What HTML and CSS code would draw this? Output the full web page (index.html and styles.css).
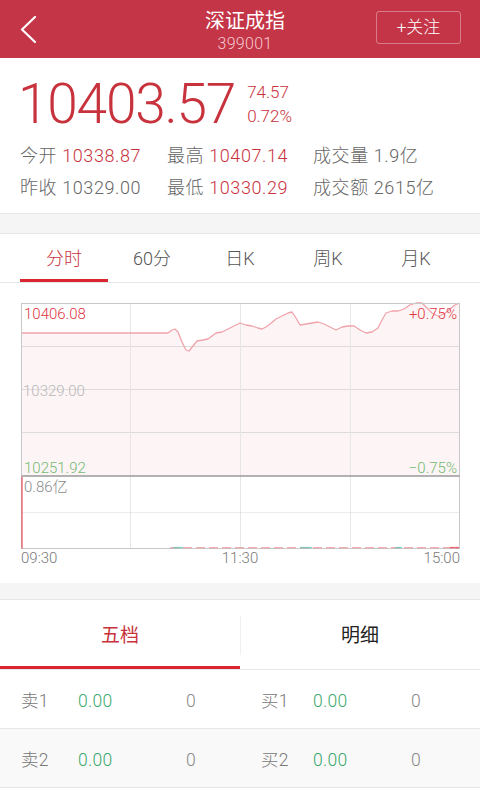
FILE: index.html
```html
<!DOCTYPE html>
<html lang="zh-CN">
<head>
<meta charset="utf-8">
<title>深证成指</title>
<link rel="stylesheet" href="styles.css">
</head>
<body>
<div class="app">
  <header class="topbar">
    <div class="back">
      <svg width="20" height="30" viewBox="0 0 20 30"><polyline points="15,2 2,14.5 15,27" fill="none" stroke="#fff" stroke-width="2.2" stroke-linecap="round" stroke-linejoin="round"/></svg>
    </div>
    <div class="title">
      <div class="name">深证成指</div>
      <div class="code">399001</div>
    </div>
    <div class="follow">+关注</div>
  </header>

  <section class="quote">
    <div class="price">10403.57</div>
    <div class="change">
      <div>74.57</div>
      <div>0.72%</div>
    </div>
  </section>

  <section class="stats">
    <div class="stat">今开 <span class="up">10338.87</span></div>
    <div class="stat">最高 <span class="up">10407.14</span></div>
    <div class="stat">成交量 1.9亿</div>
    <div class="stat">昨收 10329.00</div>
    <div class="stat">最低 <span class="up">10330.29</span></div>
    <div class="stat">成交额 2615亿</div>
  </section>

  <div class="band band-1"></div>

  <nav class="tabs">
    <div class="tab active">分时</div>
    <div class="tab">60分</div>
    <div class="tab">日K</div>
    <div class="tab">周K</div>
    <div class="tab">月K</div>
  </nav>

  <section class="chart">
    <svg width="480" height="300" viewBox="0 283 480 300">
      <polygon class="area" points="21.5,333 168,333 172,330 175,329 178,332 182,342 186,350 189,351 193,346 197,341 203,340 208,339 212,336 216,333 222,332 228,329 234,326 240,323 246,325 252,326 258,328 262,329 266,327 270,324 276,319 282,316 288,313 292,312 296,318 300,325 306,324 312,323 318,322 324,324 330,327 336,330 342,327 348,326 354,326 360,330 366,333 372,332 378,328 382,320 386,313 392,311 398,311 404,309 410,305 416,303 422,303 426,307 432,313 438,316 444,314 450,309 455,305 459.5,303 459.5,476 21.5,476"/>
      <line class="hgrid" x1="21.5" y1="346.5" x2="459.5" y2="346.5"/>
      <line class="hgrid" x1="21.5" y1="389.5" x2="459.5" y2="389.5"/>
      <line class="hgrid" x1="21.5" y1="432.5" x2="459.5" y2="432.5"/>
      <line class="vgrid" x1="130.5" y1="303" x2="130.5" y2="549"/>
      <line class="vgrid" x1="240.5" y1="303" x2="240.5" y2="549"/>
      <line class="vgrid" x1="350.5" y1="303" x2="350.5" y2="549"/>
      <line class="dotted" x1="21.5" y1="512.5" x2="459.5" y2="512.5"/>
      <polyline class="pline" points="21.5,333 168,333 172,330 175,329 178,332 182,342 186,350 189,351 193,346 197,341 203,340 208,339 212,336 216,333 222,332 228,329 234,326 240,323 246,325 252,326 258,328 262,329 266,327 270,324 276,319 282,316 288,313 292,312 296,318 300,325 306,324 312,323 318,322 324,324 330,327 336,330 342,327 348,326 354,326 360,330 366,333 372,332 378,328 382,320 386,313 392,311 398,311 404,309 410,305 416,303 422,303 426,307 432,313 438,316 444,314 450,309 455,305 459.5,303"/>
      <rect class="frame" x="21.5" y="303.5" width="438" height="245"/>
      <line class="divider" x1="21.5" y1="476" x2="459.5" y2="476"/>
      <line class="vol-up" x1="22" y1="477" x2="22" y2="548.5"/>
      <line class="vol-up dash" x1="170" y1="547.6" x2="458" y2="547.6"/>
      <line class="vol-down" x1="173" y1="547.6" x2="183" y2="547.6"/>
      <line class="vol-down" x1="300" y1="547.6" x2="312" y2="547.6"/>
      <line class="vol-down" x1="395" y1="547.6" x2="402" y2="547.6"/>
      <line class="vol-up" x1="450" y1="547.6" x2="459" y2="547.6"/>
      <text class="lbl red" x="24" y="319">10406.08</text>
      <text class="lbl red" x="457" y="319" text-anchor="end">+0.75%</text>
      <text class="lbl mid" x="23" y="396">10329.00</text>
      <text class="lbl green" x="24" y="473">10251.92</text>
      <text class="lbl green" x="457" y="473" text-anchor="end">−0.75%</text>
      <text class="lbl gray" x="24" y="492">0.86亿</text>
      <text class="lbl time" x="21" y="563">09:30</text>
      <text class="lbl time" x="240" y="563" text-anchor="middle">11:30</text>
      <text class="lbl time" x="460" y="563" text-anchor="end">15:00</text>
    </svg>
  </section>

  <div class="band band-2"></div>

  <nav class="subtabs">
    <div class="subtab active">五档</div>
    <div class="subtab">明细</div>
  </nav>

  <section class="book">
    <div class="row">
      <div class="half sell"><span class="lab">卖1</span><span class="pr">0.00</span><span class="qty">0</span></div>
      <div class="half buy"><span class="lab">买1</span><span class="pr">0.00</span><span class="qty">0</span></div>
    </div>
    <div class="row alt">
      <div class="half sell"><span class="lab">卖2</span><span class="pr">0.00</span><span class="qty">0</span></div>
      <div class="half buy"><span class="lab">买2</span><span class="pr">0.00</span><span class="qty">0</span></div>
    </div>
  </section>
</div>
</body>
</html>
```

FILE: styles.css
```css
* { box-sizing: border-box; }
html, body { margin: 0; padding: 0; background: #fff; }
body {
  font-family: Roboto, "Noto Sans CJK SC", sans-serif;
  font-weight: 300;
  color: #333;
  width: 480px;
  height: 800px;
  overflow: hidden;
}

.topbar {
  height: 58px;
  background: #c43547;
  display: flex;
  align-items: center;
  padding: 0 20px;
  color: #fff;
}
.back { width: 60px; height: 30px; display: flex; align-items: center; padding-top: 2px; }
.title { flex: 1; text-align: center; padding-left: 34px; padding-top: 4px; }
.title .name { font-size: 20px; line-height: 24px; font-weight: 400; }
.title .code { font-size: 16px; line-height: 20px; margin-top: 1px; color: #f4c9ce; letter-spacing: 0.3px; }
.follow {
  width: 85px;
  height: 33px;
  border: 1px solid rgba(255, 255, 255, 0.35);
  border-radius: 3px;
  font-size: 17px;
  line-height: 31px;
  text-align: center;
  margin-top: -3px;
  margin-right: -1px;
}

.quote {
  display: flex;
  align-items: flex-end;
  padding: 19px 20px 0 18px;
  color: #c8323c;
}
.price {
  font-size: 55px;
  line-height: 54px;
  letter-spacing: -1.2px;
}
.change {
  margin-left: 12px;
  font-size: 17px;
  line-height: 24px;
  padding-bottom: 3px;
}

.stats {
  display: grid;
  grid-template-columns: 147px 146px 1fr;
  padding: 9px 0 9px 20px;
  font-size: 18px;
  line-height: 32px;
  letter-spacing: 0.6px;
  color: #666;
}
.up { color: #c8323c; }

.band {
  background: #f5f5f5;
  border-top: 1px solid #e8e8e8;
  border-bottom: 1px solid #e6e6e6;
}
.band-1 { height: 21px; }
.band-2 { height: 17px; border-top: none; }

.tabs {
  display: flex;
  padding: 0 20px;
  border-bottom: 1px solid #e6e6e6;
}
.tab {
  flex: 1;
  height: 48px;
  padding-top: 4px;
  line-height: 41px;
  text-align: center;
  font-size: 18px;
  color: #555;
  border-bottom: 3px solid transparent;
}
.tab.active { color: #c8323c; border-bottom-color: #d9262f; }

.chart { height: 300px; }
.chart svg { display: block; }
.area { fill: #fdf4f5; stroke: none; }
.pline { fill: none; stroke: #f0a3ab; stroke-width: 1.3; stroke-linejoin: round; }
.hgrid { stroke: #dcdcdc; stroke-width: 1; }
.vgrid { stroke: #e6e6e6; stroke-width: 1; }
.dotted { stroke: #d8d8d8; stroke-width: 1; stroke-dasharray: 1 1; }
.frame { fill: none; stroke: #c8c8c8; stroke-width: 1; }
.divider { stroke: #9a9a9a; stroke-width: 1.6; }
.vol-up { stroke: #e8505a; stroke-width: 1.4; opacity: 0.85; }
.vol-up.dash { stroke: #f07a82; stroke-dasharray: 9 4; opacity: 0.6; }
.vol-down { stroke: #6cc8b8; stroke-width: 1.4; opacity: 0.8; }
.lbl { font-family: Roboto, "Noto Sans CJK SC", sans-serif; font-weight: 300; font-size: 15px; }
.red { fill: #e0343e; }
.green { fill: #72bb72; }
.mid { fill: #b8b8b8; }
.gray { fill: #8a8a8a; }
.time { fill: #7a7a7a; }

.subtabs {
  display: flex;
  border-bottom: 1px solid #e6e6e6;
}
.subtab {
  flex: 1;
  height: 69px;
  padding-top: 6px;
  line-height: 60px;
  text-align: center;
  font-size: 19px;
  font-weight: 400;
  color: #222;
  border-bottom: 3px solid transparent;
  position: relative;
}
.subtab.active { color: #c8323c; border-bottom-color: #d9262f; }
.subtab + .subtab::before {
  content: "";
  position: absolute;
  left: 0;
  top: 16px;
  height: 39px;
  border-left: 1px solid #f0f0f0;
}

.row {
  display: flex;
  height: 59px;
  padding-top: 5px;
  border-bottom: 1px solid #e6e6e6;
  font-size: 17.5px;
  line-height: 53px;
  letter-spacing: 0.3px;
}
.row.alt { background: #f9f9f9; }
.half { width: 240px; display: grid; padding-left: 21px; }
.half.sell { grid-template-columns: 57px 88px 50px; }
.half.buy { grid-template-columns: 52px 78px 50px; }
.lab { color: #777; }
.pr { color: #3aa86c; }
.qty { color: #888; text-align: center; }
```
